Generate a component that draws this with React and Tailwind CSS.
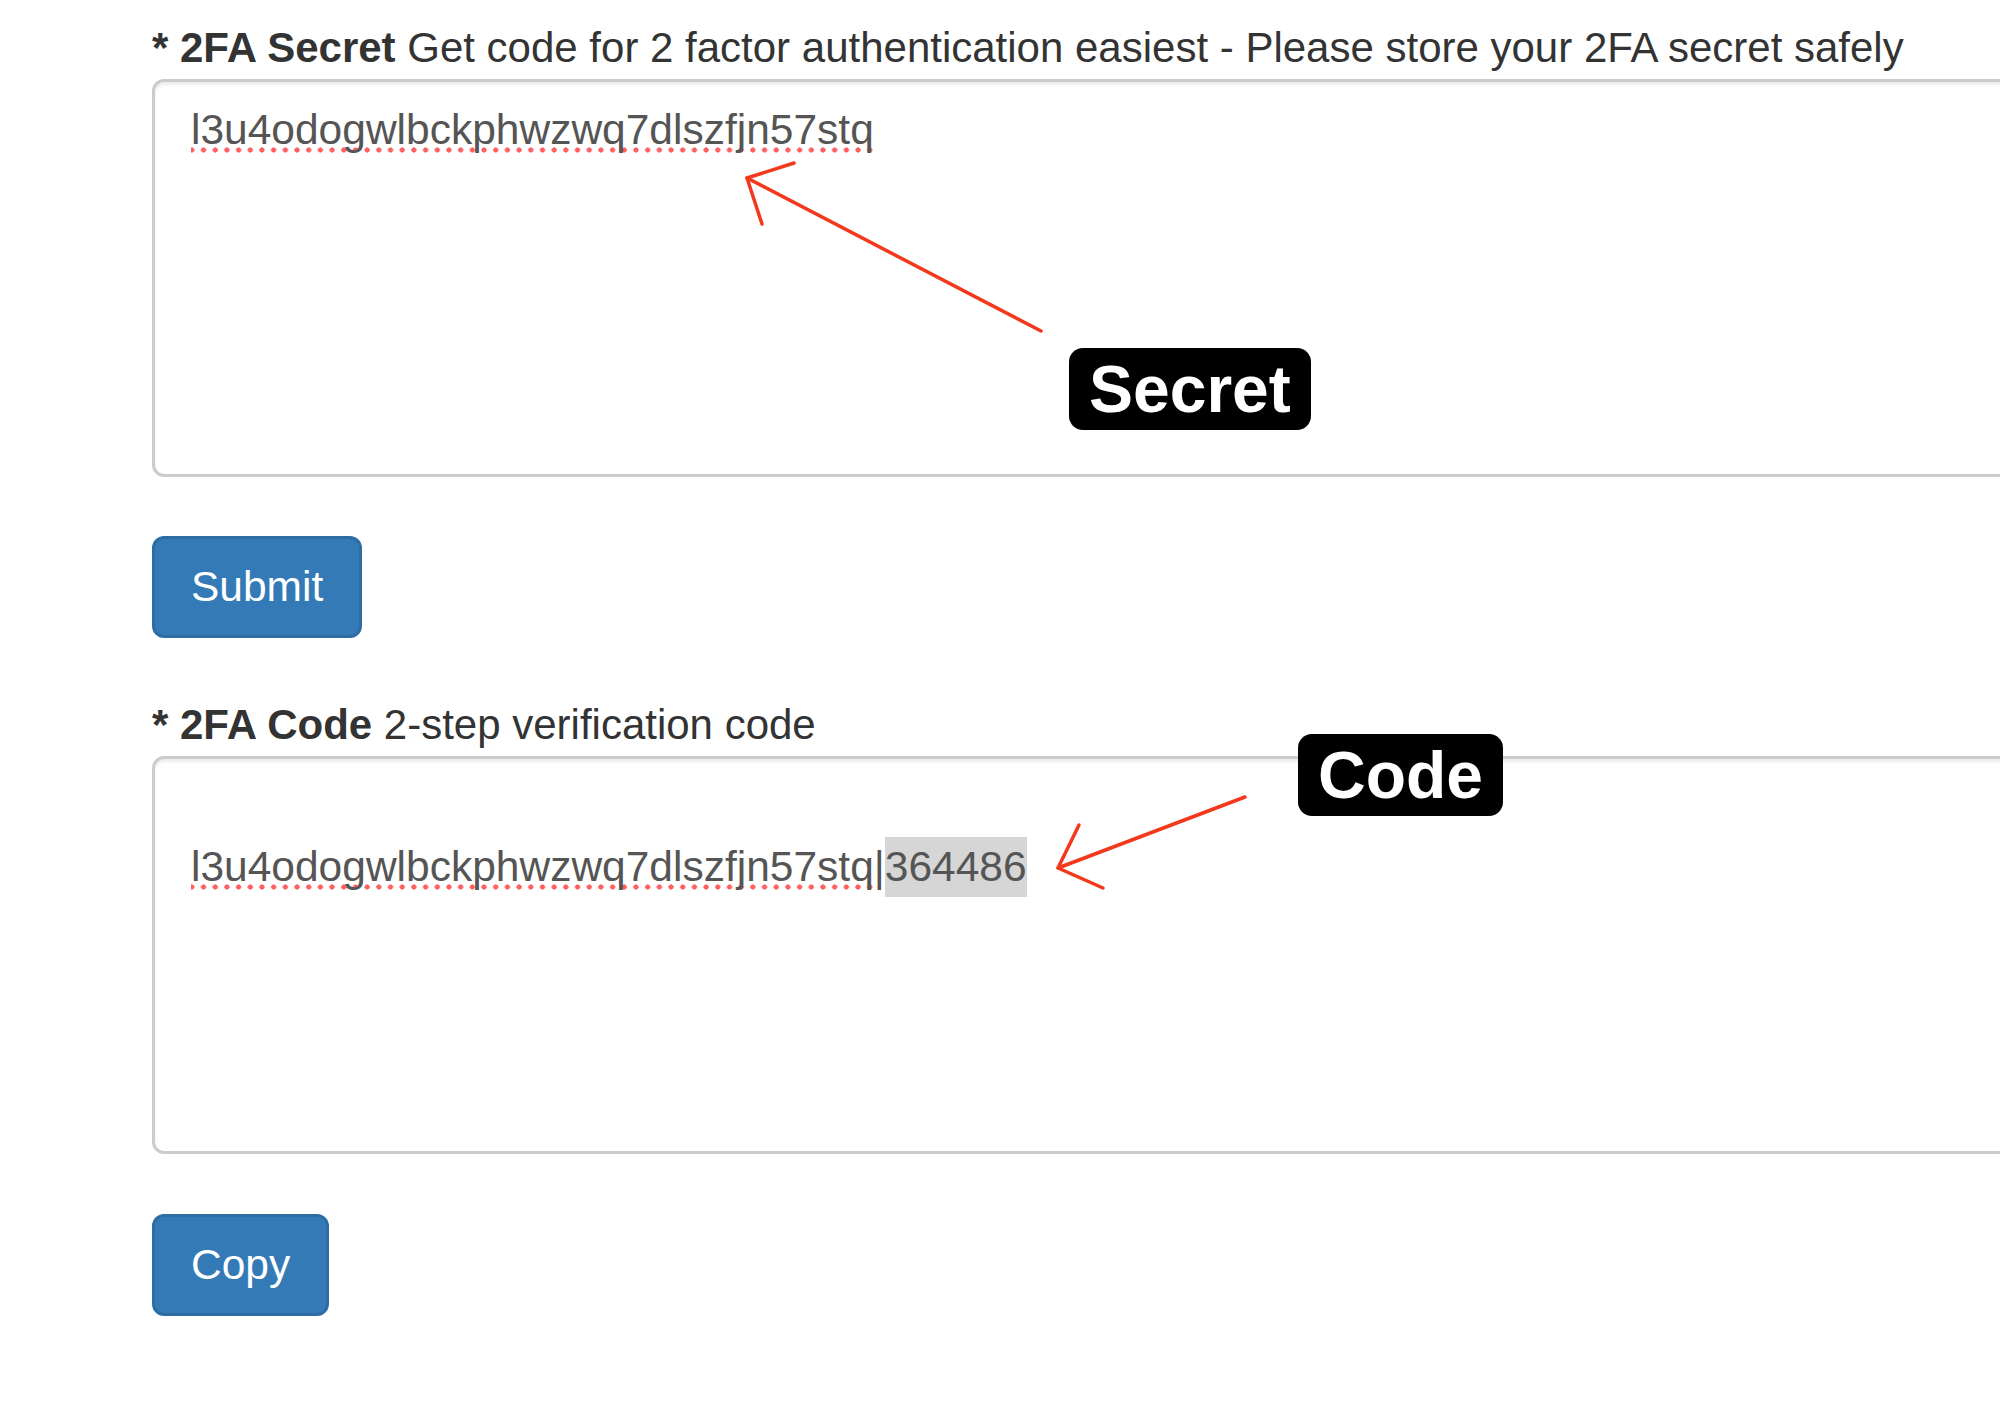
import React from 'react'

const SECRET = 'l3u4odogwlbckphwzwq7dlszfjn57stq'

// red dotted spell-check underline under a word
function Misspelled({ children }) {
  return (
    <span className="bg-[radial-gradient(circle,#ff5f5f_2.3px,transparent_2.9px)] bg-[length:11.7px_6px] bg-repeat-x bg-[position:-5px_100%]">
      {children}
    </span>
  )
}

function FieldLabel({ title, hint, className = '' }) {
  return (
    <label className={`block text-[42px] leading-[60px] text-[#333] ${className}`}>
      <span className="font-bold">* {title}</span> {hint}
    </label>
  )
}

function Box({ children, className = '' }) {
  return (
    <div
      className={`mt-px h-[398px] w-[1900px] rounded-[12px] border-[3px] border-[#cccccc] bg-white px-[36px] py-[18px] text-[42.5px] leading-[60px] text-[#555] shadow-[inset_0_3px_3px_rgba(0,0,0,0.075)] ${className}`}
    >
      {children}
    </div>
  )
}

function Button({ children, className = '' }) {
  return (
    <button
      type="button"
      className={`flex h-[102px] items-center rounded-[12px] border-[3px] border-[#2e6da4] bg-[#337ab7] px-[36px] text-[42.5px] leading-[60px] text-white ${className}`}
    >
      {children}
    </button>
  )
}

function Badge({ children, className = '' }) {
  return (
    <div
      className={`absolute flex h-[82px] items-center rounded-[14px] bg-black px-[20px] text-[66px] font-bold leading-none text-white ${className}`}
    >
      {children}
    </div>
  )
}

export default function App() {
  return (
    <div className="relative h-[1413px] w-[2000px] overflow-hidden bg-white font-['Liberation_Sans',Arial,sans-serif]">
      <div className="pl-[152px] pt-[18px]">
        <FieldLabel
          title="2FA Secret"
          hint="Get code for 2 factor authentication easiest - Please store your 2FA secret safely"
        />
        <Box>
          <Misspelled>{SECRET}</Misspelled>
        </Box>

        <Button className="mt-[59px]">Submit</Button>

        <FieldLabel className="mt-[57px]" title="2FA Code" hint="2-step verification code" />
        <Box>
          <div className="h-[60px]" />
          <div className="whitespace-nowrap">
            <Misspelled>{SECRET}</Misspelled>|
            <span className="inline-block bg-[#d6d6d6] leading-[60px]">364486</span>
          </div>
        </Box>

        <Button className="mt-[60px]">Copy</Button>
      </div>

      {/* annotations */}
      <svg
        className="pointer-events-none absolute inset-0"
        width="2000"
        height="1413"
        viewBox="0 0 2000 1413"
        fill="none"
        stroke="#f4381b"
        strokeWidth="3.5"
        strokeLinecap="round"
        strokeLinejoin="round"
      >
        <path d="M1041 331 L747 178" />
        <path d="M794 163 L747 178 L762 224" />
        <path d="M1245 797 L1058 868" />
        <path d="M1079 825 L1058 868 L1103 888" />
      </svg>
      <Badge className="left-[1069px] top-[348px]">Secret</Badge>
      <Badge className="left-[1298px] top-[734px]">Code</Badge>
    </div>
  )
}
